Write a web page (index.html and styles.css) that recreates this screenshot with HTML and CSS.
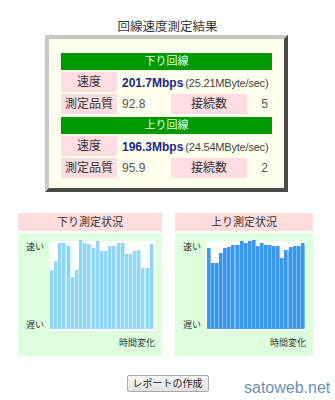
FILE: index.html
```html
<!DOCTYPE html>
<html lang="ja">
<head>
<meta charset="utf-8">
<title>回線速度測定結果</title>
<link rel="stylesheet" href="styles.css">
</head>
<body>
<div class="page">
  <h1 class="title">回線速度測定結果</h1>
  <div class="result">
    <div class="section">
      <div class="head">下り回線</div>
      <div class="label">速度</div>
      <div class="speed"><b>201.7Mbps</b><span class="sub">(25.21MByte/sec)</span></div>
      <div class="label">測定品質</div>
      <div class="val">92.8</div>
      <div class="label">接続数</div>
      <div class="val num">5</div>
    </div>
    <div class="section">
      <div class="head">上り回線</div>
      <div class="label">速度</div>
      <div class="speed"><b>196.3Mbps</b><span class="sub">(24.54MByte/sec)</span></div>
      <div class="label">測定品質</div>
      <div class="val">95.9</div>
      <div class="label">接続数</div>
      <div class="val num">2</div>
    </div>
  </div>

  <div class="charts">
    <div class="panel panel-down">
      <div class="phead">下り測定状況</div>
      <div class="pbody">
        <div class="axis"><span>速い</span><span>遅い</span></div>
        <div class="chart chart-down">
          <i style="height:59px"></i><i style="height:68px"></i><i style="height:86px"></i><i style="height:86px"></i><i style="height:83px"></i><i style="height:52px"></i><i style="height:59px"></i><i style="height:89px"></i><i style="height:86px"></i><i style="height:85px"></i><i style="height:81px"></i><i style="height:88px"></i><i style="height:78px"></i><i style="height:78px"></i><i style="height:83px"></i><i style="height:83px"></i><i style="height:86px"></i><i style="height:86px"></i><i style="height:75px"></i><i style="height:75px"></i><i style="height:78px"></i><i style="height:79px"></i><i style="height:61px"></i><i style="height:61px"></i><i style="height:85px"></i>
        </div>
        <div class="xlabel">時間変化</div>
      </div>
    </div>
    <div class="panel panel-up">
      <div class="phead">上り測定状況</div>
      <div class="pbody">
        <div class="axis"><span>速い</span><span>遅い</span></div>
        <div class="chart chart-up">
          <i style="height:81px"></i><i style="height:66px"></i><i style="height:66px"></i><i style="height:76px"></i><i style="height:81px"></i><i style="height:82px"></i><i style="height:84px"></i><i style="height:84px"></i><i style="height:88px"></i><i style="height:86px"></i><i style="height:88px"></i><i style="height:89px"></i><i style="height:83px"></i><i style="height:86px"></i><i style="height:84px"></i><i style="height:84px"></i><i style="height:83px"></i><i style="height:83px"></i><i style="height:71px"></i><i style="height:79px"></i><i style="height:82px"></i><i style="height:83px"></i><i style="height:83px"></i><i style="height:86px"></i>
        </div>
        <div class="xlabel">時間変化</div>
      </div>
    </div>
  </div>

  <div class="actions"><button class="btn" type="button">レポートの作成</button></div>
  <div class="watermark">satoweb.net</div>
</div>
</body>
</html>
```

FILE: styles.css
```css
html, body {
  margin: 0;
  padding: 0;
  background: #ffffff;
}

body {
  font-family: "Liberation Sans", "Noto Sans CJK JP", sans-serif;
  color: #333333;
}

.page {
  position: relative;
  width: 335px;
  height: 400px;
  overflow: hidden;
}

.title {
  margin: 0;
  padding-top: 19px;
  font-size: 12.5px;
  line-height: 16px;
  font-weight: normal;
  text-align: center;
  color: #333333;
}

.result {
  margin-left: 45px;
  width: 243px;
  box-sizing: border-box;
  border: 4px solid;
  border-color: #c8c8c8 #4a4a4a #4a4a4a #c8c8c8;
  background: #ffffee;
  padding: 14px 12px 10px 12px;
  display: flex;
  flex-direction: column;
  gap: 3px;
}

.section {
  display: grid;
  grid-template-columns: 56px 50px 76px 23px;
  grid-template-rows: 17px 20px 20px;
  gap: 2px;
}

.head {
  grid-column: 1 / -1;
  background: #009900;
  color: #e8ffe8;
  font-size: 11px;
  line-height: 17px;
  text-align: center;
}

.label {
  background: #ffdde0;
  font-size: 12px;
  line-height: 20px;
  text-align: center;
  color: #333333;
}

.speed {
  grid-column: 2 / -1;
  padding-left: 3px;
  line-height: 20px;
  white-space: nowrap;
}

.speed b {
  font-size: 12px;
  color: #1c2a80;
  font-weight: bold;
}

.sub {
  margin-left: 2px;
  font-size: 11px;
  color: #444444;
  letter-spacing: -0.2px;
}

.val {
  padding-left: 3px;
  font-size: 12px;
  line-height: 20px;
  color: #555555;
}

.val.num {
  padding-left: 0;
  padding-right: 4px;
  text-align: right;
}

.charts {
  display: flex;
  gap: 13px;
  margin-top: 21px;
  padding-left: 18px;
}

.panel {
  display: flex;
  flex-direction: column;
  gap: 2px;
}

.panel-down {
  width: 144px;
}

.panel-up {
  width: 138px;
}

.phead {
  background: #ffdddd;
  height: 18px;
  line-height: 18px;
  font-size: 11px;
  text-align: center;
  color: #333333;
}

.pbody {
  background: #ddffdd;
  display: grid;
  grid-template-columns: 31px 1fr;
  grid-template-rows: 90px auto;
  row-gap: 6px;
  padding: 8px 7px 7px 0;
  height: 123px;
  box-sizing: border-box;
}

.axis {
  display: flex;
  flex-direction: column;
  justify-content: space-between;
  padding-left: 8px;
  font-size: 9px;
  line-height: 12px;
  color: #333333;
}

.chart {
  background: #ffffff;
  display: flex;
  align-items: flex-end;
  padding: 0 1px 2px 1px;
  box-sizing: border-box;
}

.chart i {
  flex: 1;
  display: block;
}

.chart-down i {
  background: linear-gradient(to right, #8fd6f6 0 65%, #c9eeff 65% 100%);
}

.chart-up i {
  background: linear-gradient(to right, #3b97ee 0 65%, #7cc0ff 65% 100%);
}

.xlabel {
  grid-column: 2;
  text-align: right;
  font-size: 9px;
  line-height: 12px;
  color: #333333;
}

.actions {
  display: flex;
  justify-content: center;
  margin-top: 19px;
}

.btn {
  font-family: "Liberation Sans", "Noto Sans CJK JP", sans-serif;
  font-size: 10px;
  line-height: 14px;
  height: 17px;
  padding: 0 5px;
  border: 1px solid #a9a9a9;
  border-radius: 2px;
  background: linear-gradient(#f7f7f7, #e1e1e1);
  color: #222222;
}

.watermark {
  position: absolute;
  left: 244px;
  top: 379px;
  font-size: 16px;
  line-height: 18px;
  color: #6e8fb0;
}
```
